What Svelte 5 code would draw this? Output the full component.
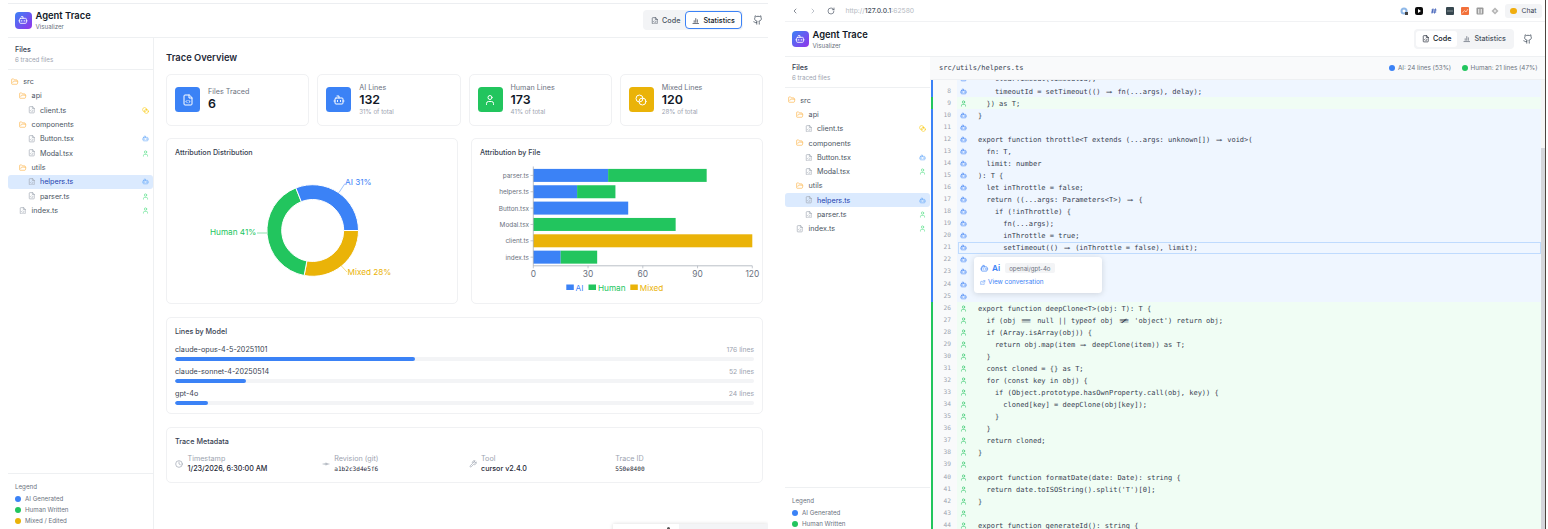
<script>
  const tree = [
    { d: 0, t: 'folder', n: 'src' },
    { d: 1, t: 'folder', n: 'api' },
    { d: 2, t: 'file', n: 'client.ts', s: 'mixed' },
    { d: 1, t: 'folder', n: 'components' },
    { d: 2, t: 'file', n: 'Button.tsx', s: 'bot' },
    { d: 2, t: 'file', n: 'Modal.tsx', s: 'user' },
    { d: 1, t: 'folder', n: 'utils' },
    { d: 2, t: 'file', n: 'helpers.ts', s: 'bot', sel: true },
    { d: 2, t: 'file', n: 'parser.ts', s: 'user' },
    { d: 1, t: 'file', n: 'index.ts', s: 'user' }
  ];
  const stats = [
    { icon: 'filecode', c: 'bg-blue', label: 'Files Traced', value: '6' },
    { icon: 'bot', c: 'bg-blue', label: 'AI Lines', value: '132', sub: '31% of total' },
    { icon: 'user', c: 'bg-green', label: 'Human Lines', value: '173', sub: '41% of total' },
    { icon: 'mixed', c: 'bg-amber', label: 'Mixed Lines', value: '120', sub: '28% of total' }
  ];
  const models = [
    { n: 'claude-opus-4-5-20251101', v: 176 },
    { n: 'claude-sonnet-4-20250514', v: 52 },
    { n: 'gpt-4o', v: 24 }
  ];
  const meta = [
    { icon: 'clock', label: 'Timestamp', value: '1/23/2026, 6:30:00 AM' },
    { icon: 'commit', label: 'Revision (git)', value: 'a1b2c3d4e5f6', mono: true },
    { icon: 'wrench', label: 'Tool', value: 'cursor v2.4.0' },
    { label: 'Trace ID', value: '550e8400', mono: true }
  ];

  const cx = 312.7, cy = 230, R = 45.8, r = 31;
  function arc(a0, a1) {
    const p = (rad, a) => {
      const t = (a * Math.PI) / 180;
      return `${(cx + rad * Math.cos(t)).toFixed(2)} ${(cy + rad * Math.sin(t)).toFixed(2)}`;
    };
    const large = a1 - a0 > 180 ? 1 : 0;
    return `M${p(R, a0)}A${R} ${R} 0 ${large} 1 ${p(R, a1)}L${p(r, a1)}A${r} ${r} 0 ${large} 0 ${p(r, a0)}Z`;
  }
  const slices = [
    { d: arc(0, 100.8), c: '#eab308' },
    { d: arc(100.8, 248.4), c: '#22c55e' },
    { d: arc(248.4, 360), c: '#3b82f6' }
  ];

  const x0 = 533.3, sx = 1.825;
  const bars = [
    { n: 'parser.ts', a: 41, h: 54, m: 0 },
    { n: 'helpers.ts', a: 24, h: 21, m: 0 },
    { n: 'Button.tsx', a: 52, h: 0, m: 0 },
    { n: 'Modal.tsx', a: 0, h: 78, m: 0 },
    { n: 'client.ts', a: 0, h: 0, m: 120 },
    { n: 'index.ts', a: 15, h: 20, m: 0 }
  ];
  const ticks = [0, 30, 60, 90, 120];

  const code = [
    [7, 'a', '    clearTimeout(timeoutId);'],
    [8, 'a', '    timeoutId = setTimeout(() => fn(...args), delay);'],
    [9, 'h', '  }) as T;'],
    [10, 'a', '}'],
    [11, 'a', ''],
    [12, 'a', 'export function throttle<T extends (...args: unknown[]) => void>('],
    [13, 'a', '  fn: T,'],
    [14, 'a', '  limit: number'],
    [15, 'a', '): T {'],
    [16, 'a', '  let inThrottle = false;'],
    [17, 'a', '  return ((...args: Parameters<T>) => {'],
    [18, 'a', '    if (!inThrottle) {'],
    [19, 'a', '      fn(...args);'],
    [20, 'a', '      inThrottle = true;'],
    [21, 'a', '      setTimeout(() => (inThrottle = false), limit);'],
    [22, 'a', ''],
    [23, 'a', ''],
    [24, 'a', ''],
    [25, 'a', ''],
    [26, 'h', 'export function deepClone<T>(obj: T): T {'],
    [27, 'h', "  if (obj === null || typeof obj !== 'object') return obj;"],
    [28, 'h', '  if (Array.isArray(obj)) {'],
    [29, 'h', '    return obj.map(item => deepClone(item)) as T;'],
    [30, 'h', '  }'],
    [31, 'h', '  const cloned = {} as T;'],
    [32, 'h', '  for (const key in obj) {'],
    [33, 'h', '    if (Object.prototype.hasOwnProperty.call(obj, key)) {'],
    [34, 'h', '      cloned[key] = deepClone(obj[key]);'],
    [35, 'h', '    }'],
    [36, 'h', '  }'],
    [37, 'h', '  return cloned;'],
    [38, 'h', '}'],
    [39, 'h', ''],
    [40, 'h', 'export function formatDate(date: Date): string {'],
    [41, 'h', "  return date.toISOString().split('T')[0];"],
    [42, 'h', '}'],
    [43, 'h', ''],
    [44, 'h', 'export function generateId(): string {'],
    [45, 'h', '  return Math.random().toString(36).slice(2);']
  ];
  const ligatures = { '=>': ['⇒', 'lig2'], '===': ['≡', 'lig3'], '!==': ['≢', 'lig3'] };
  const tokens = (text) => text.split(/(=>|===|!==)/);
</script>

{#snippet icon(name, size, cls = '')}
  <svg class="ic {cls}" width={size} height={size} viewBox="0 0 24 24" fill="none" stroke="currentColor" stroke-width="2" stroke-linecap="round" stroke-linejoin="round" aria-hidden="true">
    {#if name === 'bot'}
      <path d="M12 8V4H8" /><rect x="4" y="8" width="16" height="12" rx="2" /><path d="M2 14h2M20 14h2M15 13v2M9 13v2" />
    {:else if name === 'user'}
      <path d="M19 21v-2a4 4 0 0 0-4-4H9a4 4 0 0 0-4 4v2" /><circle cx="12" cy="7" r="4" />
    {:else if name === 'mixed'}
      <circle cx="9" cy="9" r="7" /><circle cx="15" cy="15" r="7" />
    {:else if name === 'filecode'}
      <path d="M14 2H6a2 2 0 0 0-2 2v16a2 2 0 0 0 2 2h12a2 2 0 0 0 2-2V8z" /><path d="M14 2v6h6" /><path d="m10 13-2 2 2 2M14 17l2-2-2-2" />
    {:else if name === 'folder'}
      <path d="m6 14 1.5-2.9A2 2 0 0 1 9.24 10H20a2 2 0 0 1 1.94 2.5l-1.54 6a2 2 0 0 1-1.95 1.5H4a2 2 0 0 1-2-2V5a2 2 0 0 1 2-2h3.9a2 2 0 0 1 1.69.9l.81 1.2a2 2 0 0 0 1.67.9H18a2 2 0 0 1 2 2v2" />
    {:else if name === 'chart'}
      <path d="M3 21h18M7 17v-5M12 17V5M17 17V9" />
    {:else if name === 'github'}
      <path d="M15 22v-4a4.8 4.8 0 0 0-1-3.5c3 0 6-2 6-5.5.08-1.25-.27-2.48-1-3.5.28-1.15.28-2.35 0-3.5 0 0-1 0-3 1.5-2.64-.5-5.36-.5-8 0C6 2 5 2 5 2c-.3 1.15-.3 2.35 0 3.5A5.403 5.403 0 0 0 4 9c0 3.5 3 5.5 6 5.5-.39.49-.68 1.05-.85 1.65-.17.6-.22 1.23-.15 1.85v4" /><path d="M9 18c-4.51 2-5-2-7-2" />
    {:else if name === 'clock'}
      <circle cx="12" cy="12" r="10" /><path d="M12 6v6l4 2" />
    {:else if name === 'commit'}
      <circle cx="12" cy="12" r="3" /><path d="M3 12h6M15 12h6" />
    {:else if name === 'wrench'}
      <path d="M14.7 6.3a1 1 0 0 0 0 1.4l1.6 1.6a1 1 0 0 0 1.4 0l3.77-3.77a6 6 0 0 1-7.94 7.94l-6.91 6.91a2.12 2.12 0 0 1-3-3l6.91-6.91a6 6 0 0 1 7.94-7.94l-3.76 3.76z" />
    {:else if name === 'link'}
      <path d="M15 3h6v6M10 14 21 3M18 13v6a2 2 0 0 1-2 2H5a2 2 0 0 1-2-2V8a2 2 0 0 1 2-2h6" />
    {:else if name === 'back'}
      <path d="m15 18-6-6 6-6" />
    {:else if name === 'forward'}
      <path d="m9 18 6-6-6-6" />
    {:else if name === 'reload'}
      <path d="M21 12a9 9 0 1 1-9-9c2.52 0 4.93 1 6.74 2.74L21 8" /><path d="M21 3v5h-5" />
    {/if}
  </svg>
{/snippet}

{#snippet header(active)}
  <header class="hdr">
    <div class="logo">{@render icon('bot', 10)}</div>
    <div class="brand">
      <div class="brand-title">Agent Trace</div>
      <div class="brand-sub">Visualizer</div>
    </div>
    <div class="tabs">
      <div class="tab" class:on={active === 'code'}>{@render icon('filecode', 7.5)}Code</div>
      <div class="tab" class:on={active === 'stats'} class:focus={active === 'stats'}>{@render icon('chart', 7.5)}Statistics</div>
    </div>
    <div class="gh">{@render icon('github', 10)}</div>
  </header>
{/snippet}

{#snippet sidebar()}
  <aside class="side">
    <div class="side-head">
      <div class="side-title">Files</div>
      <div class="side-sub">6 traced files</div>
    </div>
    <div class="tree">
      {#each tree as row}
        <div class="row d{row.d}" class:sel={row.sel}>
          {#if row.t === 'folder'}
            <span class="t-folder">{@render icon('folder', 7.5)}</span>
          {:else}
            <span class="t-file">{@render icon('filecode', 7.5)}</span>
          {/if}
          <span class="row-name">{row.n}</span>
          {#if row.s}
            <span class="row-status s-{row.s}">{@render icon(row.s, 7)}</span>
          {/if}
        </div>
      {/each}
    </div>
    <div class="legend">
      <div class="legend-title">Legend</div>
      <div class="legend-row"><i class="dot bg-blue"></i>AI Generated</div>
      <div class="legend-row"><i class="dot bg-green"></i>Human Written</div>
      <div class="legend-row"><i class="dot bg-amber"></i>Mixed / Edited</div>
    </div>
  </aside>
{/snippet}

<div class="screen">
  <section class="win win-left">
    {@render header('stats')}
    <div class="body">
      {@render sidebar()}
      <main class="main">
        <h1>Trace Overview</h1>
        <div class="stat-grid">
          {#each stats as s}
            <div class="card stat">
              <div class="stat-ic {s.c}">{@render icon(s.icon, 12)}</div>
              <div>
                <div class="stat-label">{s.label}</div>
                <div class="stat-value">{s.value}</div>
                {#if s.sub}<div class="stat-sub">{s.sub}</div>{/if}
              </div>
            </div>
          {/each}
        </div>

        <div class="chart-grid">
          <div class="card block">
            <h2>Attribution Distribution</h2>
            <svg class="chart" viewBox="175 157.5 274 137">
              {#each slices as s}
                <path d={s.d} fill={s.c} stroke="#fff" stroke-width="1" />
              {/each}
              <path d="M339 192L345 183" stroke="#3b82f6" stroke-width=".5" fill="none" />
              <path d="M257 232.500H267" stroke="#22c55e" stroke-width=".5" fill="none" />
              <path d="M341 265L347 271.500" stroke="#eab308" stroke-width=".5" fill="none" />
              <text x="345" y="184" class="pie-label" fill="#3b82f6">AI 31%</text>
              <text x="210" y="234" class="pie-label" fill="#22c55e">Human 41%</text>
              <text x="347.500" y="274.500" class="pie-label" fill="#eab308">Mixed 28%</text>
            </svg>
          </div>
          <div class="card block">
            <h2>Attribution by File</h2>
            <svg class="chart" viewBox="480 157.5 274 137">
              {#each bars as b, i}
                {@const y = 168.4 + i * 16.35}
                {#if b.a}<rect x={x0} {y} width={b.a * sx} height="13" fill="#3b82f6" />{/if}
                {#if b.h}<rect x={x0 + b.a * sx} {y} width={b.h * sx} height="13" fill="#22c55e" />{/if}
                {#if b.m}<rect x={x0} {y} width={b.m * sx} height="13" fill="#eab308" />{/if}
                <path d="M530.500 {y + 6.500}H533.300" stroke="#9ca3af" stroke-width=".6" />
                <text x="529" y={y + 9} text-anchor="end" class="bar-label">{b.n}</text>
              {/each}
              <path d="M533.300 166V265.300H752.300" fill="none" stroke="#9ca3af" stroke-width=".7" />
              {#each ticks as t}
                <path d="M{x0 + t * sx} 265.300v2.500" stroke="#9ca3af" stroke-width=".6" />
                <text x={x0 + t * sx} y="276" text-anchor="middle" class="tick">{t}</text>
              {/each}
              <rect x="566.300" y="284" width="7.500" height="5.500" fill="#3b82f6" />
              <text x="575.500" y="290" class="pie-label" fill="#3b82f6">AI</text>
              <rect x="588.500" y="284" width="7.500" height="5.500" fill="#22c55e" />
              <text x="598" y="290" class="pie-label" fill="#22c55e">Human</text>
              <rect x="630.300" y="284" width="7.500" height="5.500" fill="#eab308" />
              <text x="639.800" y="290" class="pie-label" fill="#eab308">Mixed</text>
            </svg>
          </div>
        </div>

        <div class="card block models">
          <h2>Lines by Model</h2>
          {#each models as m}
            <div class="model">
              <div class="model-head"><span class="model-name">{m.n}</span><span class="model-val">{m.v} lines</span></div>
              <div class="track"><div class="fill" style="width:{(m.v / 425) * 100}%"></div></div>
            </div>
          {/each}
        </div>

        <div class="card block metadata">
          <h2>Trace Metadata</h2>
          <div class="meta-grid">
            {#each meta as m}
              <div class="meta">
                {#if m.icon}<span class="meta-ic">{@render icon(m.icon, 8)}</span>{/if}
                <div>
                  <div class="meta-label">{m.label}</div>
                  <div class="meta-value" class:mono={m.mono}>{m.value}</div>
                </div>
              </div>
            {/each}
          </div>
        </div>
      </main>
    </div>
    <div class="dock">
      <div class="dock-a"><i class="dock-dot"></i></div>
      <div class="dock-b"></div>
    </div>
  </section>

  <section class="win win-right">
    <div class="browser">
      <span class="nav">{@render icon('back', 8)}</span>
      <span class="nav dim">{@render icon('forward', 8)}</span>
      <span class="nav">{@render icon('reload', 8)}</span>
      <div class="url">http://<b>127.0.0.1</b>:62580</div>
      <div class="exts">
        <svg width="8" height="8" viewBox="0 0 8 8"><circle cx="4" cy="4" r="3.500" fill="#8fb8e8" /><circle cx="4" cy="4" r="1.500" fill="#fff" /><rect x="5" y="5" width="3" height="3" fill="#444" /></svg>
        <svg width="8" height="8" viewBox="0 0 8 8"><rect width="8" height="8" rx="2" fill="#0b0b0b" /><path d="M3 2l3 2-3 2z" fill="#fff" /></svg>
        <svg width="8" height="8" viewBox="0 0 8 8"><path d="M3 1.500L2 6.500M5.500 1.500L4.500 6.500M1.500 3h5M1.200 5h5" stroke="#3b5bb5" stroke-width=".9" fill="none" /></svg>
        <svg width="8" height="8" viewBox="0 0 8 8"><rect width="8" height="8" rx="1" fill="#37474f" /><path d="M1.500 4h5" stroke="#cfd8dc" stroke-width="1" stroke-dasharray="1 1" /></svg>
        <svg width="8" height="8" viewBox="0 0 8 8"><rect width="8" height="8" rx="1" fill="#f2703a" /><path d="M1 6.500L3.500 3.500 5 5 7 2" stroke="#ffd9c4" stroke-width=".8" fill="none" /></svg>
        <svg width="8" height="8" viewBox="0 0 8 8"><rect x=".5" y=".5" width="7" height="7" rx="1" fill="#9a9a9a" /><rect x="2" y="2" width="4" height="4.500" fill="#e0e0e0" /><rect x="3.500" y="2" width="1" height="4.500" fill="#8a8a8a" /></svg>
        <svg width="8" height="8" viewBox="0 0 8 8"><path d="M4 .5L7.500 4 4 7.500.5 4z" fill="#b5b5b5" /><circle cx="4" cy="4" r="1.200" fill="#e5e5e5" /></svg>
      </div>
      <div class="chat"><i class="chat-dot"></i>Chat</div>
    </div>
    {@render header('code')}
    <div class="body">
      {@render sidebar()}
      <div class="code">
        <div class="code-top">
          <span class="code-path">src/utils/helpers.ts</span>
          <span class="code-stat"><i class="cdot bg-blue"></i>AI: 24 lines (53%)</span>
          <span class="code-stat"><i class="cdot bg-green"></i>Human: 21 lines (47%)</span>
        </div>
        <div class="code-body">
          <div class="lines">
            {#each code as [n, k, text]}
              <div class="line {k}" class:hover={n === 21}>
                <span class="num">{n}</span>
                <span class="who">{@render icon(k === 'a' ? 'bot' : 'user', 7)}</span>
                <span class="src">{#each tokens(text) as tk}{#if ligatures[tk]}<span class="lig {ligatures[tk][1]}"><span>{ligatures[tk][0]}</span></span>{:else}{tk}{/if}{/each}</span>
              </div>
            {/each}
          </div>
          <div class="scroll"><div class="thumb"></div></div>
          <div class="tip">
            <div class="tip-top">
              <span class="tip-ic">{@render icon('bot', 8.5)}</span>
              <b>Ai</b>
              <span class="chip">openai/gpt-4o</span>
            </div>
            <div class="tip-link">{@render icon('link', 5.5)}View conversation</div>
          </div>
        </div>
      </div>
    </div>
  </section>
</div>

<style>
  :global(body) { margin: 0; background: #fff; }
  .screen { display: flex; align-items: flex-start; width: 1548px; height: 529px; overflow: hidden; background: #fff; font-family: Inter, "Noto Sans", sans-serif; color: #111827; }
  .ic { display: block; flex: none; }

  .win { position: relative; display: flex; flex-direction: column; flex: none; background: #fff; }
  .win-left { width: 760px; height: 526.5px; margin: 2.5px 0 0 8px; border-top: 0.5px solid #eceef1; box-sizing: border-box; overflow: hidden; }
  .win-right { width: 759.5px; height: 543px; margin-left: 17px; border-right: 1px solid #4b463f; overflow: hidden; }

  .hdr { height: 33.5px; flex: none; display: flex; align-items: center; padding: 0 0 0 7px; border-bottom: 1px solid #eef0f2; box-sizing: content-box; }
  .logo { width: 16.500px; height: 16.500px; border-radius: 4px; background: linear-gradient(135deg, #3b82f6, #9333ea); color: #fff; display: flex; align-items: center; justify-content: center; flex: none; }
  .brand { margin-left: 4px; }
  .brand-title { font-size: 9.400px; line-height: 13px; font-weight: 600; color: #111827; }
  .brand-sub { font-size: 6.200px; line-height: 9px; color: #6b7280; }
  .tabs { margin-left: auto; display: flex; align-items: center; padding: 2px; height: 20px; box-sizing: border-box; background: #f3f4f6; border-radius: 4px; }
  .tab { display: flex; align-items: center; gap: 3.500px; height: 16px; padding: 0 6px; font-size: 7.200px; font-weight: 500; color: #4b5563; border-radius: 3px; box-sizing: border-box; }
  .tab.on { background: #fff; color: #111827; }
  .tab.focus { outline: 1.200px solid #3b82f6; }
  .gh { margin-left: 10px; margin-right: 5px; color: #4b5563; width: 10px; }
  .win-right .gh { margin-left: 9px; margin-right: 11.500px; }

  .body { flex: 1; min-height: 0; display: flex; }
  .side { width: 146px; flex: none; display: flex; flex-direction: column; border-right: 1px solid #eef0f2; box-sizing: border-box; }
  .win-right .side { width: 145px; border-right: 0; }
  .side-head { height: 31.5px; flex: none; padding: 6.500px 7px 0; border-bottom: 1px solid #eef0f2; box-sizing: border-box; }
  .side-title { font-size: 7.200px; line-height: 10px; font-weight: 500; color: #374151; }
  .side-sub { font-size: 6.200px; line-height: 10px; color: #9ca3af; }
  .tree { flex: 1; padding-top: 5px; }
  .row { display: flex; align-items: center; height: 14.300px; border-radius: 3px; font-size: 7.200px; color: #4b5563; padding-right: 4px; }
  .row.d0 { padding-left: 3px; }
  .row.d1 { padding-left: 11.300px; }
  .row.d2 { padding-left: 19.600px; }
  .row.sel { background: #dbeafe; color: #1e40af; }
  .row-name { margin-left: 4.800px; }
  .row-status { margin-left: auto; }
  .t-folder { color: #fbb040; }
  .t-file { color: #9ca3af; }
  .s-bot { color: #60a5fa; }
  .s-user { color: #4ade80; }
  .s-mixed { color: #facc15; }
  .legend { flex: none; height: 56px; padding: 7.500px 7px 0; border-top: 1px solid #eef0f2; box-sizing: border-box; }
  .legend-title { font-size: 6.200px; line-height: 10px; color: #6b7280; margin-bottom: 1.500px; }
  .legend-row { display: flex; align-items: center; gap: 4px; height: 11.200px; font-size: 6.200px; color: #6b7280; }
  .dot { width: 6px; height: 6px; border-radius: 50%; flex: none; }
  .bg-blue { background: #3b82f6; }
  .bg-green { background: #22c55e; }
  .bg-amber { background: #eab308; }

  .main { flex: 1; min-width: 0; padding: 0 5px 0 12px; }
  h1 { margin: 12.500px 0 0; font-size: 9.400px; line-height: 14px; font-weight: 600; color: #1f2937; }
  h2 { margin: 0; font-size: 7.200px; line-height: 11px; font-weight: 500; color: #374151; }
  .card { background: #fff; border: 1px solid #f0f1f3; border-radius: 5px; box-sizing: border-box; }
  .stat-grid { display: grid; grid-template-columns: repeat(4, 1fr); gap: 8px; margin-top: 9px; }
  .stat { height: 52px; display: flex; align-items: center; gap: 8px; padding: 0 8px; }
  .stat-ic { width: 25px; height: 25px; border-radius: 3.500px; display: flex; align-items: center; justify-content: center; color: #fff; flex: none; }
  .stat-label { font-size: 7.200px; line-height: 10px; color: #6b7280; }
  .stat-value { font-size: 12.400px; line-height: 14.500px; font-weight: 600; color: #111827; }
  .stat-sub { font-size: 6.200px; line-height: 9.500px; color: #9ca3af; }
  .chart-grid { display: grid; grid-template-columns: 1fr 1fr; gap: 13px; margin-top: 12.500px; }
  .block { padding: 8px; }
  .chart { display: block; width: 274px; height: 137px; overflow: visible; }
  .chart text { font-family: Inter, "Noto Sans", sans-serif; }
  .pie-label { font-size: 8.200px; }
  .bar-label { font-size: 6.400px; fill: #6b7280; }
  .tick { font-size: 8.400px; fill: #6b7280; }
  .models { margin-top: 13px; height: 97px; }
  .metadata { margin-top: 12.500px; height: 56px; }
  .models h2, .metadata h2 { margin-bottom: 7px; }
  .model { margin-bottom: 5.500px; }
  .model:last-child { margin-bottom: 0; }
  .model-head { display: flex; justify-content: space-between; font-size: 7.200px; line-height: 12.500px; }
  .model-name { color: #374151; }
  .model-val { color: #9ca3af; font-size: 6.800px; }
  .track { height: 4px; background: #f3f4f6; border-radius: 2px; overflow: hidden; }
  .fill { height: 100%; background: #3b82f6; border-radius: 2px; }
  .meta-grid { display: grid; grid-template-columns: repeat(4, 1fr); gap: 8px; }
  .meta { display: flex; align-items: center; gap: 4.500px; }
  .meta-ic { color: #9ca3af; }
  .meta-label { font-size: 7.200px; line-height: 10px; color: #9ca3af; }
  .meta-value { font-size: 7.200px; line-height: 10px; font-weight: 500; color: #1f2937; }
  .meta-value.mono { font-family: "DejaVu Sans Mono", monospace; font-size: 6.100px; font-weight: 400; }

  .dock { position: absolute; left: 605px; top: 520px; display: flex; width: 155px; height: 20px; box-shadow: 0 0 4px rgba(0, 0, 0, .15); }
  .dock-a { width: 65.500px; background: #fff; position: relative; }
  .dock-b { flex: 1; background: #f3f4f6; }
  .dock-dot { position: absolute; left: 54px; top: 3px; width: 3px; height: 3px; border-radius: 50%; background: #555; }

  .browser { height: 21px; flex: none; display: flex; align-items: center; border-bottom: 1px solid #f1f2f4; padding-left: 6px; }
  .nav { color: #4b5563; margin-right: 9.800px; }
  .nav.dim { color: #9ca3af; }
  .url { font-size: 6.800px; color: #b5bac2; margin-left: 1px; }
  .url b { color: #4b5563; font-weight: 500; }
  .exts { margin-left: auto; display: flex; gap: 7.300px; align-items: center; }
  .chat { display: flex; align-items: center; gap: 4px; height: 14px; margin: 0 3px 0 6px; padding: 0 5px; border-radius: 3px; background: #f3f4f6; font-size: 6.800px; color: #374151; }
  .chat-dot { width: 7px; height: 6px; border-radius: 3px; background: #f0ad0e; }

  .code { flex: 1; min-width: 0; display: flex; flex-direction: column; }
  .code-top { height: 23px; flex: none; display: flex; align-items: center; gap: 11px; padding: 0 7px 0 9px; background: #f9fafb; border-bottom: 1px solid #eef0f2; box-sizing: border-box; }
  .code-path { font-family: "DejaVu Sans Mono", monospace; font-size: 7.030px; color: #374151; margin-right: auto; }
  .code-stat { display: flex; align-items: center; gap: 2.500px; font-size: 6.300px; color: #6b7280; }
  .cdot { width: 6px; height: 6px; border-radius: 50%; }
  .code-body { position: relative; flex: 1; min-height: 0; display: flex; overflow: hidden; }
  .lines { flex: 1; min-width: 0; margin-top: -6.600px; }
  .line { position: relative; display: flex; align-items: center; height: 12.070px; border-left: 2px solid; margin-left: 1px; }
  .line.a { border-left-color: #3b82f6; background: #eff6ff; }
  .line.h { border-left-color: #22c55e; background: #f0fdf4; }
  .num { width: 24px; flex: none; box-sizing: border-box; align-self: stretch; padding: 0 6px 2px 0; display: flex; align-items: center; justify-content: flex-end; background: #f9fafb; font-size: 6.200px; color: #9ca3af; font-family: "DejaVu Sans Mono", monospace; }
  .who { width: 12px; flex: none; display: flex; justify-content: center; }
  .line.a .who { color: #3b82f6; }
  .line.h .who { color: #22c55e; }
  .src { margin-left: 9px; white-space: pre; font-family: "DejaVu Sans Mono", monospace; font-size: 7.030px; color: #374151; }
  .lig { display: inline-block; text-align: center; }
  .lig span { display: inline-block; }
  .lig2 { width: 2ch; }
  .lig2 span { transform: scaleX(1.5); }
  .lig3 { width: 3ch; }
  .lig3 span { transform: scaleX(2.4); }
  .line.hover::after { content: ""; position: absolute; left: 25px; right: 0; top: 0; bottom: 0; border: 1px solid #bfdbfe; pointer-events: none; }
  .scroll { width: 3.500px; flex: none; background: #f5f5f5; padding-top: 68px; }
  .thumb { height: 100%; background: #d4d6db; }
  .tip { position: absolute; left: 44px; top: 177.500px; width: 128px; height: 36px; box-sizing: border-box; padding: 5.500px 6px; background: #fff; border-radius: 3.500px; box-shadow: 0 1px 6px rgba(0, 0, 0, .14); }
  .tip-top { display: flex; align-items: center; gap: 3.500px; height: 11px; }
  .tip-ic { color: #3b82f6; }
  .tip-top b { font-size: 8.200px; font-weight: 600; color: #3b82f6; }
  .chip { margin-left: 1.500px; padding: 1.500px 4px; background: #f3f4f6; border-radius: 2px; font-size: 6.100px; line-height: 7px; color: #6b7280; }
  .tip-link { display: flex; align-items: center; gap: 2.500px; margin-top: 4.500px; font-size: 6.400px; line-height: 9px; color: #3b82f6; }
</style>
